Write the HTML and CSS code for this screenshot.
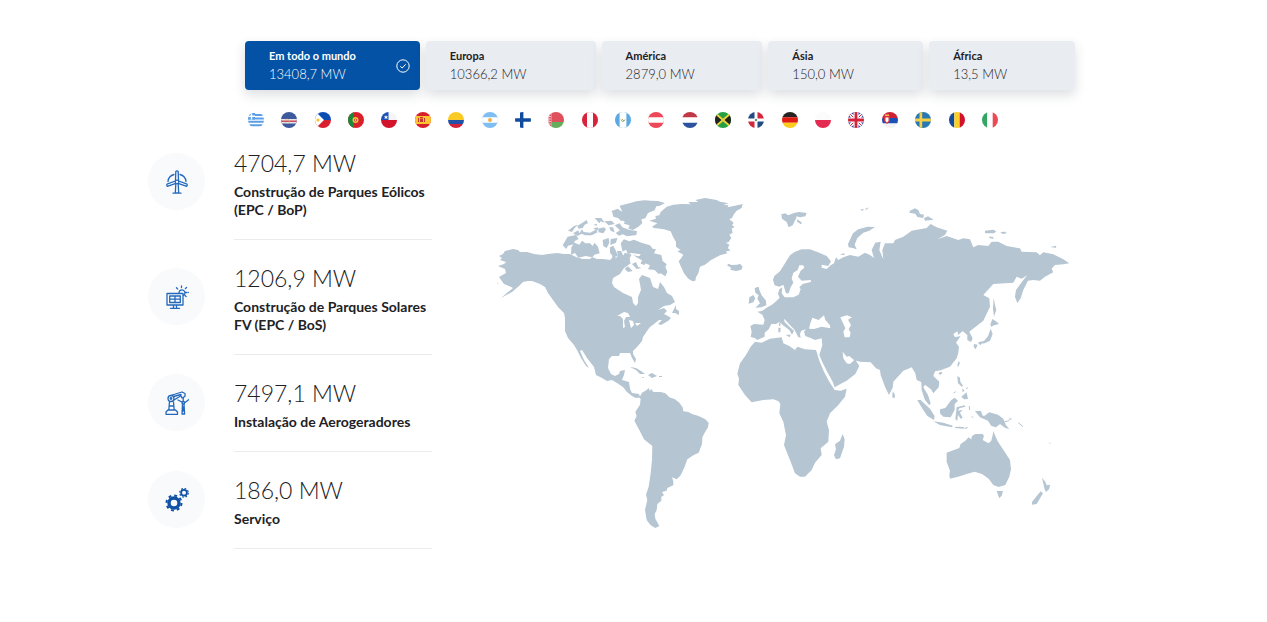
FILE: index.html
```html
<!DOCTYPE html>
<html lang="pt">
<head>
<meta charset="utf-8">
<meta name="viewport" content="width=device-width, initial-scale=1">
<title>Presença mundial</title>
<link rel="stylesheet" href="styles.css">
</head>
<body>
<main class="page">
  <div class="top">
    <div class="tabs">
      <button type="button" class="tab tab-world active" aria-pressed="true">
        <span class="tab-text"><span class="tab-name">Em todo o mundo</span><span class="tab-value">13408,7 MW</span></span>
        <svg class="check" viewBox="0 0 14 14" aria-hidden="true"><circle cx="7" cy="7" r="6.2"/><path d="M4.3 7.3l1.9 1.7 3.5-3.7"/></svg>
      </button>
      <button type="button" class="tab tab-europe"><span class="tab-text"><span class="tab-name">Europa</span><span class="tab-value">10366,2 MW</span></span></button>
      <button type="button" class="tab tab-america"><span class="tab-text"><span class="tab-name">América</span><span class="tab-value">2879,0 MW</span></span></button>
      <button type="button" class="tab tab-asia"><span class="tab-text"><span class="tab-name">Ásia</span><span class="tab-value">150,0 MW</span></span></button>
      <button type="button" class="tab tab-africa"><span class="tab-text"><span class="tab-name">África</span><span class="tab-value">13,5 MW</span></span></button>
    </div>
    <ul class="flags">
      <li><svg viewBox="0 0 16 16"><path fill="#fff" d="M0 0h16v16H0z"/><path fill="#5a9ee8" d="M0 2h16v2H0zM0 5.4h16v2H0zM0 8.8h16v2H0zM0 12.2h16v2H0z"/><path fill="#5a9ee8" d="M0 1h7v6.4H0z"/><path fill="#fff" d="M2.8 1h1.4v6.4H2.8zM0 3.6h7V5H0z"/></svg></li>
      <li><svg viewBox="0 0 16 16"><path fill="#3d5a9c" d="M0 0h16v16H0z"/><path fill="#e8e4ec" d="M0 7h16v4.5H0z"/><path fill="#c94f5e" d="M0 8.5h16V10H0z"/><circle cx="6" cy="9.3" r="2.2" fill="none" stroke="#d8b05a" stroke-dasharray="1 1"/></svg></li>
      <li><svg viewBox="0 0 16 16"><path fill="#0b4eb3" d="M0 0h16v8H0z"/><path fill="#d9202f" d="M0 8h16v8H0z"/><path fill="#fff" d="M0-1l9 9-9 9z"/><circle cx="3" cy="8" r="1.6" fill="#f7c52b"/></svg></li>
      <li><svg viewBox="0 0 16 16"><path fill="#d8202a" d="M0 0h16v16H0z"/><path fill="#1a8a3a" d="M0 0h6v16H0z"/><circle cx="7.5" cy="8" r="3" fill="#f2c33a"/><circle cx="7.5" cy="8" r="1.6" fill="#d8433a"/><circle cx="7.5" cy="8" r=".7" fill="#fff"/></svg></li>
      <li><svg viewBox="0 0 16 16"><path fill="#f5f5f8" d="M0 0h16v8H0z"/><path fill="#d3122c" d="M0 8h16v8H0z"/><path fill="#1b51b4" d="M0 0h7.5v8H0z"/><path fill="#fff" d="M5 3l.6 1.5h1.6L6 5.500l.5 1.600L5 6.200 3.500 7.100 4 5.500 2.800 4.500h1.600z"/></svg></li>
      <li><svg viewBox="0 0 16 16"><path fill="#d8202a" d="M0 0h16v16H0z"/><path fill="#fbc430" d="M0 4h16v8H0z"/><path fill="#c3372d" d="M3 6h1v4H3zM5 6.500h3V10H5zM9 6h1v4H9zM5 5h3v1H5z"/></svg></li>
      <li><svg viewBox="0 0 16 16"><path fill="#fbcb25" d="M0 0h16v8H0z"/><path fill="#2252a8" d="M0 8h16v4H0z"/><path fill="#d5203a" d="M0 12h16v4H0z"/></svg></li>
      <li><svg viewBox="0 0 16 16"><path fill="#80bdf0" d="M0 0h16v16H0z"/><path fill="#fff" d="M0 5.300h16v5.400H0z"/><circle cx="8" cy="8" r="2" fill="#f2b04a"/></svg></li>
      <li><svg viewBox="0 0 16 16"><path fill="#fff" d="M0 0h16v16H0z"/><path fill="#124a9e" d="M5 0h3.400v6.300H16v3.400H8.400V16H5V9.700H0V6.300h5z"/></svg></li>
      <li><svg viewBox="0 0 16 16"><path fill="#e0505c" d="M0 0h16v10H0z"/><path fill="#65ad5c" d="M0 10h16v6H0z"/><path fill="#f3c4c8" d="M0 0h3.500v16H0z"/><path fill="none" stroke="#d9505c" stroke-width="2" stroke-dasharray="1.500 1" d="M2.300 0v16"/></svg></li>
      <li><svg viewBox="0 0 16 16"><path fill="#d9233b" d="M0 0h16v16H0z"/><path fill="#fff" d="M5 0h6v16H5z"/></svg></li>
      <li><svg viewBox="0 0 16 16"><path fill="#5ca8e3" d="M0 0h16v16H0z"/><path fill="#fff" d="M4.600 0h6.800v16H4.600z"/><path fill="none" stroke="#84a85c" d="M6 7.500c.5 2.500 3.500 2.500 4 0"/><path stroke="#c49c5c" d="M7 7l2 2"/></svg></li>
      <li><svg viewBox="0 0 16 16"><path fill="#ee4858" d="M0 0h16v16H0z"/><path fill="#fff" d="M0 5.300h16v5.400H0z"/></svg></li>
      <li><svg viewBox="0 0 16 16"><path fill="#fff" d="M0 0h16v16H0z"/><path fill="#c03848" d="M0 0h16v5.300H0z"/><path fill="#2c539e" d="M0 10.700h16V16H0z"/></svg></li>
      <li><svg viewBox="0 0 16 16"><path fill="#27a044" d="M0 0h16v16H0z"/><path fill="#1f2420" d="M0 2l7 6-7 6zM16 2L9 8l7 6z"/><path stroke="#f2d23c" stroke-width="1.800" d="M0 1l16 14M16 1L0 15"/></svg></li>
      <li><svg viewBox="0 0 16 16"><path fill="#fff" d="M0 0h16v16H0z"/><path fill="#234a82" d="M0 0h6.500v6.500H0zM9.500 9.500H16V16H9.500z"/><path fill="#d3283c" d="M9.500 0H16v6.500H9.500zM0 9.500h6.500V16H0z"/><circle cx="8" cy="8" r="1.200" fill="#5c9078"/></svg></li>
      <li><svg viewBox="0 0 16 16"><path fill="#272322" d="M0 0h16v5.300H0z"/><path fill="#e01b12" d="M0 5.300h16v5.400H0z"/><path fill="#fccb1c" d="M0 10.700h16V16H0z"/></svg></li>
      <li><svg viewBox="0 0 16 16"><path fill="#fbfbfc" d="M0 0h16v8H0z"/><path fill="#e32a50" d="M0 8h16v8H0z"/></svg></li>
      <li><svg viewBox="0 0 16 16"><path fill="#293e8d" d="M0 0h16v16H0z"/><path stroke="#fff" stroke-width="3.500" d="M0 0l16 16M16 0L0 16"/><path stroke="#d3233c" d="M0 0l16 16M16 0L0 16"/><path stroke="#fff" stroke-width="5" d="M8 0v16M0 8h16"/><path stroke="#d3233c" stroke-width="2.800" d="M8 0v16M0 8h16"/></svg></li>
      <li><svg viewBox="0 0 16 16"><path fill="#cf2237" d="M0 0h16v6H0z"/><path fill="#1b50b4" d="M0 6h16v5.500H0z"/><path fill="#f3f3f6" d="M0 11.500h16V16H0z"/><path fill="#d9303b" d="M2 3.500h6V9l-3 3-3-3z"/><path fill="#fff" d="M3.500 5.500h3V9L5 10.500 3.500 9z"/><path fill="#f2c04a" d="M3 2.500h4V4H3z"/></svg></li>
      <li><svg viewBox="0 0 16 16"><path fill="#2878b3" d="M0 0h16v16H0z"/><path fill="#f5cf45" d="M4.500 0h2.700v6.600H16v2.800H7.200V16H4.500V9.400H0V6.600h4.500z"/></svg></li>
      <li><svg viewBox="0 0 16 16"><path fill="#124a9e" d="M0 0h5.300v16H0z"/><path fill="#fbcf2b" d="M5.300 0h5.400v16H5.300z"/><path fill="#d0132b" d="M10.700 0H16v16h-5.300z"/></svg></li>
      <li><svg viewBox="0 0 16 16"><path fill="#35a564" d="M0 0h5.300v16H0z"/><path fill="#fff" d="M5.300 0h5.400v16H5.300z"/><path fill="#e94a55" d="M10.700 0H16v16h-5.300z"/></svg></li>
    </ul>
  </div>

  <div class="content">
    <ul class="stats">
      <li class="stat">
        <span class="icon"><svg viewBox="0 0 24 24" aria-hidden="true"><g class="line"><path d="M10.500 10L10.800 1.500q1.200-1.400 2.400 0l.3 8.500M13.800 11l8.200 3.200q.7 1-.3 2.200l-8.500-3M10.200 11L2 14.200q-.7 1 .3 2.200l8.500-3M10.800 14l-.5 9h3.400l-.5-9M8 23.200h8"/><circle cx="12" cy="12" r="1.800"/><path d="M9 4.500a8 8 0 0 0-6 7M15 4.500a8 8 0 0 1 6 7"/></g></svg></span>
        <div class="stat-text"><p class="stat-value">4704,7 MW</p><p class="stat-name">Construção de Parques Eólicos (EPC / BoP)</p></div>
      </li>
      <li class="stat">
        <span class="icon"><svg viewBox="0 0 24 24" aria-hidden="true"><g class="line"><path d="M2 8.500h16v11.500H2zM4.700 11h10.600v6.500H4.700zM10 11v6.500M4.700 14.200h10.600M8.500 20v3M11.500 20v3M5.500 23.300h9M14 7.500a3 3 0 1 1 4.500 3"/><path stroke-dasharray="1.600 1.600" d="M16.500 1v3M11.500 2.800l2 2M21.500 2.500l-2 2M20.500 7.500h3.200M20 10.500l2 2"/></g></svg></span>
        <div class="stat-text"><p class="stat-value">1206,9 MW</p><p class="stat-name">Construção de Parques Solares FV (EPC / BoS)</p></div>
      </li>
      <li class="stat">
        <span class="icon"><svg viewBox="0 0 24 24" aria-hidden="true"><g class="line"><circle cx="6" cy="7.500" r="3"/><circle cx="6" cy="7.500" r=".8"/><path d="M5.500 4.500L17 1l3 1.500v3L17 7l-1-2.200-7 4.200M8.500 5.500L16 3.500M4.500 11L3.800 19h5.400L8.500 11M4.200 15h4.600M1 23.300v-2.300l2-2h7.500l2 2v2.300z"/><path d="M18.200 6.500v4M17.500 13L17 23h2.600L19 13M16.800 11L13 9M20 11.500L24 8.500M18.200 16v4"/><circle cx="18.300" cy="11.800" r="1.300"/></g></svg></span>
        <div class="stat-text"><p class="stat-value">7497,1 MW</p><p class="stat-name">Instalação de Aerogeradores</p></div>
      </li>
      <li class="stat">
        <span class="icon"><svg viewBox="0 0 24 24" aria-hidden="true"><g class="gear"><circle cx="9" cy="15" r="5" stroke-width="3.400"/><circle cx="9" cy="15" r="7.500" stroke-width="2" stroke-dasharray="2.900 2.990"/><circle cx="19" cy="4.800" r="2.900" stroke-width="1.800"/><circle cx="19" cy="4.800" r="4.300" stroke-width="1.200" stroke-dasharray="1.690 1.690"/></g></svg></span>
        <div class="stat-text"><p class="stat-value">186,0 MW</p><p class="stat-name">Serviço</p></div>
      </li>
    </ul>

    <svg class="map" viewBox="497 198 573 330" role="img" aria-label="Mapa do mundo">
      <!-- North America -->
      <path d="M498 266L504 264 506 262 500 260 502 258 499 256 503 254 505 251 513 249 518 250 520 252 527 252 534 254 542 255 548 254 557 253 564 254 570 254 576 257 579 258 583 259 590 259 592 257 597 259 603 259 610 260 612 258 613 254 616 258 618 256 617 251 621 251 624 257 622 262 627 260 631 263 627 266 624 268 620 274 613 278 612 283 614 287 623 293 632 297 633 303 636 306 638 303 638 297 641 290 640 284 639 279 642 275 650 278 653 287 658 289 660 282 664 287 667 293 672 296 675 302 670 305 664 306 658 310 664 308 667 311 664 314 668 316 671 318 668 321 661 325 658 324 662 320 659 320 654 324 650 327 647 331 643 337 642 341 637 347 633 351 633 354 636 359 635 363 632 358 630 353 625 353 620 353 619 356 612 356 609 359 608 368 611 374 615 376 619 374 620 371 625 370 624 375 622 380 629 382 630 389 632 393 639 394 640 397 636 398 632 396 627 392 623 387 617 383 612 380 607 381 602 378 596 375 594 367 587 358 582 350 580 351 584 360 589 368 586 366 581 358 577 350 574 345 568 338 565 331 565 318 564 313 558 307 553 300 548 293 545 287 540 284 532 281 528 281 523 282 519 286 512 292 501 298 508 292 513 288 509 286 504 284 499 277 506 273 505 269z"/>
      <g transform="translate(490 190) scale(.3333)">
        <path d="M363 64l20-8 14 10-8-19 32-8 18-5 24-3 20 1 20 1 22 6-15 8-11 2-5 12-20 8-8 16-12 3 3 12-12 10-16 10-14-4 4-10-18-5 4-5-14-8 2-10-16-8z"/>
        <path d="M392 160l10-12 16 6 14-5 22 9 26 8 8 10 10 2-6 12 22 5 4 18 12 10-4 8 6 14-6 14-14-9-6 2-12-12-20-2 6-12-18-8 0-14-14-2 4-9-28-4-10 4-6-14-10 6z"/>
        <path d="M218 166l15-26 25-5 8 12-12 6-2 10-18 4-5 10zM244 172l10-14 14 6 8-12 10 8 14 0 8 8 6-10 10 12 5 20-16 4-6 8-20-4-22 5-10-14-12 5z"/>
        <path d="M234 122l18-14 12-4-10 10-8 12zM262 108l28-18 4 10-10 4-6 10-12 2zM249 130l16-9 3 9 8-12 5 8 20 2 16-9 6 8-18 9-20 0-10-5-13 7zM314 84l20 0 10 14-12-4-4 6zM310 115l15-3-3 11zM343 94l22-2 9 10-18 4zM366 64l18 4 20 14-10 12-10-10-14-4zM324 116l18-4 6 6-8 12-14-3zM357 112l12 0 5 15-11-4zM374 106l15-6 8 12 22 8 22 3-2 12-28 4-12-6-12 4-10-8 13-8zM338 150l18-6 2 14-8 16-10-6zM362 147l20-3-4 14-17 7zM360 172l10-5 8 16 6 16-14 2-10-13zM383 193l16 5 6-10 20 6-6 10 2 12-15-4-8 10-10-5zM404 236l10-7 14 14-14 3zM430 195l14 4 14-4 12 14-6 16-12-4 4-10-14-8zM426 222l12-6 6 14 10 4-14 3zM310 105l10-4 2 6zM20 278l5 0-1 3z"/>
      </g>
      <path d="M672 313L676 305 676 309 679 311 679 315 675 313zM630 367L636 368 641 371 645 374 640 374 636 370zM648 375L652 373 657 376 652 378zM659 376h3v1h-3zM641 377l3 0 0 1zM559 307L566 311 567 315z"/>
      <!-- Greenland, Iceland -->
      <path transform="translate(640 190) scale(.3333)" d="M28 92L48 86 46 78 58 76 62 66 80 50 100 44 125 42 152 43 145 36 175 36 166 30 195 24 230 30 240 35 266 40 250 44 266 46 262 52 285 47 308 42 305 54 290 62 282 72 276 84 268 88 281 98 276 106 284 110 275 116 278 128 268 134 274 144 266 156 258 158 268 164 264 174 271 182 258 184 262 190 240 196 212 211 195 224 180 230 175 250 168 262 166 272 158 274 145 266 132 250 122 228 116 214 124 204 130 194 112 184 122 180 108 170 108 156 98 138 92 124 72 118 42 114 36 110 52 100zM261 226L266 221 274 225 292 224 300 221 308 230 304 239 288 243 270 239 274 234z"/>
      <!-- South America -->
      <path transform="translate(620 370) scale(.3333)" d="M46 76L54 84 60 79 66 68 80 60 86 54 90 64 93 56 100 66 122 66 136 70 148 82 165 88 178 98 188 112 190 124 205 126 216 132 236 138 256 148 266 158 264 172 254 188 247 202 246 222 236 248 220 256 202 268 194 290 182 316 170 328 156 322 160 334 160 346 142 354 140 362 126 366 132 376 124 380 124 392 112 402 110 420 104 432 106 446 118 468 106 474 92 466 80 450 75 420 82 390 78 374 86 350 92 310 96 270 97 228 72 208 56 176 43 152 50 138 46 126 60 104 62 86z"/>

      <g transform="translate(730 200) scale(.3333)">
        <!-- Eurasia -->
        <path d="M62 411L65 395 61 378 72 372 100 374 104 360 97 344 82 335 96 333 112 322 126 314 140 302 149 293 144 282 148 268 157 262 155 280 164 292 190 292 206 284 212 268 208 262 218 252 242 246 243 240 215 242 204 230 212 212 223 203 220 196 208 196 203 210 190 218 185 235 190 248 182 262 176 280 168 280 160 254 148 260 134 256 129 240 133 228 150 214 165 190 180 166 195 155 215 148 240 148 262 156 290 168 303 184 295 198 275 194 275 203 290 207 302 196 312 190 318 172 325 180 340 172 360 165 385 170 405 158 420 165 432 174 425 150 436 128 452 125 448 150 460 178 457 150 465 130 490 130 495 120 520 110 545 92 590 84 602 72 620 82 652 92 645 105 622 118 650 108 685 120 700 115 720 118 730 142 745 135 775 138 785 125 805 125 830 138 870 145 875 155 920 157 930 166 940 157 970 163 1000 178 1018 190 1000 193 975 195 965 206 970 217 945 230 930 242 910 240 894 242 880 270 872 295 862 310 855 290 858 270 880 240 892 226 875 236 860 230 850 248 790 252 760 285 778 295 780 320 760 362 735 382 718 395 728 415 723 426 712 420 712 405 698 393 685 405 682 394 670 402 675 412 692 408 678 428 687 440 685 458 680 475 660 500 632 511 615 514 610 528 628 545 626 562 610 580 603 568 585 554 580 562 594 585 602 610 598 616 585 600 575 570 574 546 560 540 556 520 545 502 535 506 520 512 490 545 488 563 477 585 465 560 452 525 450 510 438 505 422 487 390 485 372 480 358 468 350 470 338 455 340 475 350 490 360 492 375 478 388 498 376 522 350 542 330 553 314 562 308 545 290 512 278 488 268 465 272 452 277 435 275 415 255 420 242 414 226 408 222 395 228 388 214 392 210 402 212 414 204 410 194 390 175 370 163 356 163 365 180 382 192 392 186 404 178 390 162 378 148 366 138 372 124 372 116 388 104 398 104 410 82 420 74 414z"/>
        <!-- Africa -->
        <path d="M75 425L95 428 120 416 155 412 160 430 178 438 195 450 202 440 225 448 258 450 262 462 268 482 282 515 298 545 314 570 332 572 350 566 345 590 325 615 300 640 290 665 297 690 295 725 272 745 275 765 255 788 245 810 225 830 210 830 195 820 182 785 162 735 168 705 160 665 148 640 151 612 146 604 130 598 100 600 65 607 45 585 25 555 27 535 22 522 30 490 48 465 62 440z"/>
        <path d="M338 702L344 718 342 740 330 775 318 778 312 765 318 748 315 733 330 722z"/>
        <!-- British Isles and Arctic islands -->
        <path d="M74 264L86 260 88 270 95 286 108 302 109 316 94 322 76 323 90 310 82 296 86 286 76 278zM58 292L70 285 76 295 70 307 56 311zM154 43l12-3 8 6 20-8 6 14-12 24-12 6-6-16-14-10zM192 39l15-3 23 3-4 10-16 3-16-5zM202 58l14 10-3 5-12-8zM390 30l10-4 0 6zM405 27l12-5-8 8zM354 132L369 100 385 88 413 80 435 81 418 92 400 98 382 114 374 134 380 148 368 144 356 142zM330 165l13-6 0 6zM540 32l15-7 10 5 5 12 12 2-2 10-18-3-6-10-18-3zM582 55l12-6 17 10-26 3zM765 92l26-3 8 6-8 5-26 0zM811 96l15-1 4 5-12 2zM776 110l12 0 4 6-12-1zM965 140l14-3-1 6-15-1zM147 368l4 0 0 10-4 0zM145 383l7 0-1 14-6 0zM167 404l15 0-3 8z"/>
        <!-- East and South-East Asia -->
        <path d="M791 293L795 315 799 330 792 350 789 326zM781 374L787 357 800 365 807 372 792 376 784 380zM782 386L788 402 780 422 764 430 748 432 744 427 762 423 774 409zM732 432l11 2-6 14-6-8zM745 429l11-1-5 8zM625 519l10-4 2 5-7 5zM686 484l4 4-6 14-2-7zM488 574l7 10-1 11-7-3zM562 600L572 600 600 626 614 648 612 660 592 648 576 624zM610 664L640 668 668 677 666 682 630 675zM675 681l14-1 14 2-2 4-26-2zM702 685l12-5-4 7zM630 628L646 624 664 600 674 593 684 602 674 612 674 630 662 652 640 650 630 640zM682 528l8 5 1 12 8 12-3 4-12-12zM694 590l16-13 4 20-12 1zM698 565l6 8-7 3zM680 622L704 616 706 620 688 625 684 632 698 630 690 638 698 653 692 656 684 644 682 662 676 658zM735 633L753 633 758 647 764 647 778 637 804 644 820 656 828 676 838 687 826 684 810 672 798 682 784 678 774 662 750 652z"/>
        <path d="M807 673l-6-15M823 665l12-2 8-8M838 653l6 6M865 668l14 12M718 618l1 12M725 650l5 3M958 728l3 3M714 563l-6 3M671 580l6-5" class="speck"/>
        <!-- Australia, New Zealand -->
        <path d="M650 758L688 744 692 732 706 722 716 712 724 718 726 708 736 702 758 702 762 708 758 720 776 730 784 722 788 706 790 693 796 708 804 725 822 752 840 780 843 808 838 830 826 855 806 861 790 855 776 836 756 822 734 815 710 822 690 829 660 836 658 826 660 812 650 786zM800 873l19 0-4 14-7 8zM936 833L946 845 950 856 961 854 957 868 948 876 944 868zM932 874L939 880 932 892 920 912 906 914 906 906z"/>
        <!-- Inland seas -->
        <g class="water"><path d="M237 386L241 370 247 353 266 360 282 346 286 360 300 376 301 385 275 380 252 387z"/><path d="M331 352L351 346 366 352 354 359 363 375 356 388 362 398 359 412 344 412 340 395 346 385z"/></g>
      </g>
      <path class="water" d="M617 316L624 312 628 313 630 317 626 317 624 321 625 327 623 328 623 319 620 316zM629 320L633 321 634 325 631 328zM635 323L641 323 637 326z"/>
    </svg>
  </div>
</main>
</body>
</html>
```
FILE: styles.css
```css
* { box-sizing: border-box; }
body {
  margin: 0;
  background: #fff;
  color: #212124;
  font-family: Lato, "Open Sans", sans-serif;
}
ul, p { margin: 0; padding: 0; }
ul { list-style: none; }
.page { padding: 41px 192px 40px 148px; }
.top { margin-left: 97px; }
.tabs { display: flex; gap: 6px; }
.tab {
  display: flex;
  align-items: center;
  justify-content: space-between;
  height: 49px;
  padding: 0 10px 0 24px;
  border: 0;
  border-radius: 4px;
  background: #e9ecf1;
  box-shadow: 0 5px 12px rgba(40, 50, 70, .16);
  color: inherit;
  font-family: inherit;
  text-align: left;
  cursor: pointer;
}
.tab-world { flex: 141 1 0; }
.tab-europe { flex: 136 1 0; }
.tab-america { flex: 127 1 0; }
.tab-asia { flex: 121 1 0; }
.tab-africa { flex: 112 1 0; }
.active { background: #0352a6; color: #fff; }
.tab-text { display: grid; }
.tab-name { font-size: 11px; font-weight: 700; line-height: 16px; }
.tab-value { font-size: 13px; font-weight: 300; line-height: 20px; }
.check { width: 14px; height: 14px; }
.check * { fill: none; stroke: #fff; stroke-width: 1; }
.flags {
  display: flex;
  justify-content: space-between;
  margin-top: 22px;
  padding: 0 77px 0 3px;
}
.flags svg { display: block; width: 16px; height: 16px; border-radius: 50%; }
.content {
  display: grid;
  grid-template-columns: 284px 1fr;
  gap: 65px;
  align-items: start;
  margin-top: 19px;
  padding-right: 5px;
}
.stat {
  display: grid;
  grid-template-columns: 57px 1fr;
  column-gap: 29px;
  align-items: center;
  margin-bottom: 22px;
}
.stat::after {
  grid-column: 2;
  height: 1px;
  margin-top: 20px;
  background: #ececee;
  content: "";
}
.icon {
  display: grid;
  place-items: center;
  height: 57px;
  margin-top: -3px;
  border-radius: 50%;
  background: #f8fafb;
}
.icon svg { width: 24px; height: 24px; }
.line { fill: none; stroke: #2368bc; stroke-width: 1.3; stroke-linecap: round; stroke-linejoin: round; }
.gear { fill: none; stroke: #0f52a5; }
.stat-value { font-size: 23px; font-weight: 300; line-height: 32px; }
.stat-name { margin-top: 4px; font-size: 14px; font-weight: 700; line-height: 18px; }
.map { display: block; width: 100%; margin-top: 51px; fill: #b5c5d2; }
.water { fill: #fff; }
.speck { fill: none; stroke: #b5c5d2; stroke-width: 3; }
```
